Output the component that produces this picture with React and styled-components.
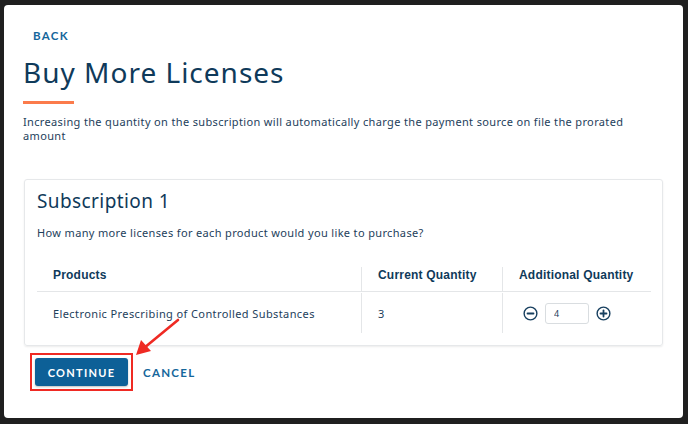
import styled, { createGlobalStyle } from 'styled-components'

const GlobalStyle = createGlobalStyle`
  html, body {
    margin: 0;
    padding: 0;
    background: #1f1f1f;
  }
  body {
    font-family: "Noto Sans", "Open Sans", sans-serif;
    color: #1c3d5a;
  }
`

const Page = styled.div`
  width: 688px;
  height: 424px;
  padding: 5px 5px 6px 4px;
  box-sizing: border-box;
  position: relative;
`

const Panel = styled.div`
  height: 100%;
  background: #fff;
  border-radius: 4px;
  padding: 18px 20px 0 19px;
  box-sizing: border-box;
`

const TextButton = styled.button`
  background: none;
  border: none;
  padding: 0 ${(p) => p.$pad || 0}px;
  font-family: "Lato", sans-serif;
  font-weight: 700;
  font-size: 11.5px;
  letter-spacing: 1.3px;
  color: #15669b;
  cursor: pointer;
`

const Title = styled.h1`
  margin: 9px 0 0;
  font-family: "Noto Sans", sans-serif;
  font-weight: 400;
  font-size: 28px;
  line-height: 36px;
  letter-spacing: 1px;
  color: #0f3a5a;
`

const Accent = styled.div`
  width: 51px;
  height: 3px;
  background: #fb7b4b;
  margin-top: 11px;
`

const Intro = styled.p`
  margin: 11px 0 0;
  font-size: 11px;
  line-height: 14px;
  letter-spacing: 0.35px;
  color: #1d3e5b;
  max-width: 630px;
`

const Card = styled.div`
  margin: 36px 0 0 1px;
  width: 639px;
  height: 167px;
  box-sizing: border-box;
  border: 1px solid #e6e8ea;
  border-radius: 3px;
  box-shadow: 0 1px 2px rgba(0, 0, 0, 0.08);
  padding: 8px 12px 0 12px;
`

const CardTitle = styled.h2`
  margin: 0;
  font-weight: 400;
  font-size: 19px;
  line-height: 26px;
  letter-spacing: 0.4px;
  color: #0f3a5a;
`

const Question = styled.p`
  margin: 12px 0 0;
  font-size: 11px;
  line-height: 14px;
  letter-spacing: 0.35px;
  color: #1d3e5b;
`

const Table = styled.div`
  margin-top: 27px;
  width: 614px;
  display: grid;
  grid-template-columns: 324px 141px 1fr;
`

const HeadCell = styled.div`
  height: 25px;
  display: flex;
  align-items: center;
  padding: 0 16px 9px;
  font-family: "Liberation Sans", sans-serif;
  font-weight: 700;
  font-size: 12px;
  letter-spacing: 0.2px;
  color: #0f3a5a;
  border-bottom: 1px solid #e4e6e8;
  border-left: ${(p) => (p.$divider ? '1px solid #e4e6e8' : 'none')};
  box-sizing: border-box;
`

const BodyCell = styled.div`
  height: 40px;
  margin-top: 1px;
  display: flex;
  align-items: center;
  padding: 0 16px;
  font-size: 11px;
  letter-spacing: 0.4px;
  color: #1d3e5b;
  border-left: ${(p) => (p.$divider ? '1px solid #e4e6e8' : 'none')};
  box-sizing: border-box;
`

const Stepper = styled.div`
  display: flex;
  align-items: center;
  gap: 7px;
  margin-left: 4px;
`

const QtyInput = styled.input`
  width: 44px;
  height: 21px;
  box-sizing: border-box;
  border: 1px solid #d9dde0;
  border-radius: 3px;
  padding: 0 8px;
  font-family: "Noto Sans", sans-serif;
  font-size: 9px;
  color: #1d3e5b;
  outline: none;
`

const RoundIcon = styled.svg`
  width: 15px;
  height: 15px;
  display: block;
`

const Actions = styled.div`
  margin-top: 7px;
  margin-left: 7px;
  display: flex;
  align-items: center;
  gap: 10px;
`

const Highlight = styled.div`
  border: 2px solid #ef2a23;
  padding: 3px;
  display: flex;
`

const PrimaryButton = styled.button`
  width: 93px;
  height: 28px;
  background: #0d6097;
  border: none;
  border-radius: 3px;
  color: #fff;
  font-family: "Lato", sans-serif;
  font-weight: 700;
  font-size: 11px;
  letter-spacing: 1.3px;
  box-shadow: 0 1px 2px rgba(0, 0, 0, 0.25);
`

const Arrow = styled.svg`
  position: absolute;
  left: 130px;
  top: 315px;
  width: 56px;
  height: 46px;
`

function CircleButton({ plus }) {
  return (
    <RoundIcon viewBox="0 0 16 16">
      <circle cx="8" cy="8" r="6.8" fill="none" stroke="#173f5f" strokeWidth="1.5" />
      <path d="M4.8 8h6.4" stroke="#173f5f" strokeWidth="1.9" strokeLinecap="round" />
      {plus && <path d="M8 4.8v6.4" stroke="#173f5f" strokeWidth="1.9" strokeLinecap="round" />}
    </RoundIcon>
  )
}

function App() {
  return (
    <Page>
      <GlobalStyle />
      <Panel>
        <TextButton $pad={10}>BACK</TextButton>
        <Title>Buy More Licenses</Title>
        <Accent />
        <Intro>
          Increasing the quantity on the subscription will automatically charge the payment source on file the prorated amount
        </Intro>
        <Card>
          <CardTitle>Subscription 1</CardTitle>
          <Question>How many more licenses for each product would you like to purchase?</Question>
          <Table>
            <HeadCell>Products</HeadCell>
            <HeadCell $divider>Current Quantity</HeadCell>
            <HeadCell $divider>Additional Quantity</HeadCell>
            <BodyCell>Electronic Prescribing of Controlled Substances</BodyCell>
            <BodyCell $divider>3</BodyCell>
            <BodyCell $divider>
              <Stepper>
                <CircleButton />
                <QtyInput defaultValue="4" />
                <CircleButton plus />
              </Stepper>
            </BodyCell>
          </Table>
        </Card>
        <Actions>
          <Highlight>
            <PrimaryButton>CONTINUE</PrimaryButton>
          </Highlight>
          <TextButton $pad={0}>CANCEL</TextButton>
        </Actions>
      </Panel>
      <Arrow viewBox="0 0 56 46">
        <path d="M48 5 L14 33" stroke="#ef2a23" strokeWidth="2.6" strokeLinecap="round" />
        <path d="M6 40 L11 25 L21 36 Z" fill="#ef2a23" />
      </Arrow>
    </Page>
  )
}

export default App
